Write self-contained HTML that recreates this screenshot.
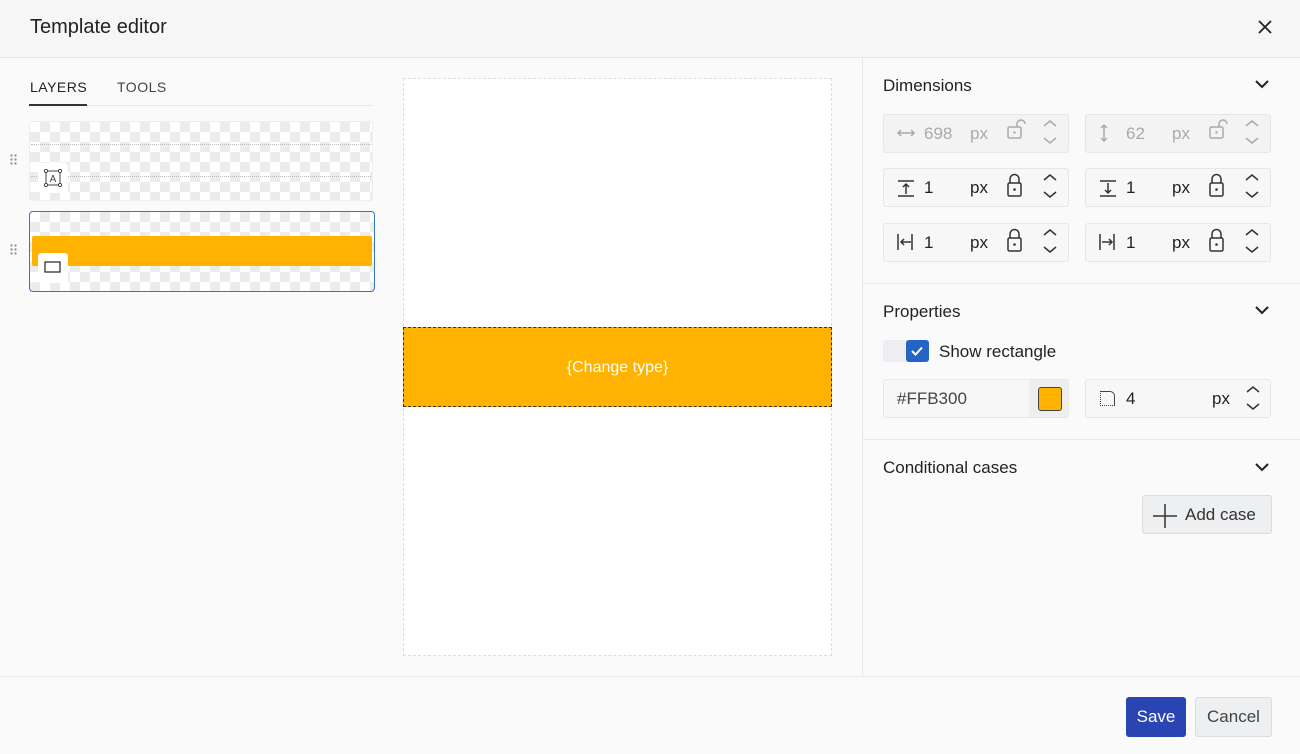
<!DOCTYPE html>
<html><head><style>
*{box-sizing:border-box;margin:0;padding:0}
body{width:1300px;height:754px;background:#fafafa;font-family:"Liberation Sans",sans-serif;color:#222;position:relative;overflow:hidden}
.abs{position:absolute}
.hdr{left:0;top:0;width:1300px;height:58px;background:#f6f6f6;border-bottom:1px solid #e8e8e8}
.chk{background-color:#fff;background-image:linear-gradient(45deg,#ececec 25%,transparent 25%,transparent 75%,#ececec 75%),linear-gradient(45deg,#ececec 25%,transparent 25%,transparent 75%,#ececec 75%);background-size:20px 20px;background-position:0 0,10px 10px}
.inp{position:absolute;width:186px;height:39px;border:1px solid #e6e6e6;border-radius:3px;background:#f7f7f7;font-size:17px}
.inp span{position:absolute;top:9px}
.dis{color:#aaa}
.sec{font-size:17px;color:#222;position:absolute;left:883px}
.chev{position:absolute;left:1254px}
</style></head><body>
<div class="abs hdr"><div class="abs" style="left:30px;top:16px;font-size:20px;color:#222">Template editor</div>
<svg class="abs" style="left:1257px;top:19px" width="16" height="16"><path d="M2 2L14 14M14 2L2 14" stroke="#222" stroke-width="1.8"/></svg></div>

<div class="abs" style="left:30px;top:79px;font-size:14px;letter-spacing:.5px;color:#222">LAYERS</div>
<div class="abs" style="left:117px;top:79px;font-size:14px;letter-spacing:.5px;color:#444">TOOLS</div>
<div class="abs" style="left:29px;top:105px;width:344px;height:1px;background:#e6e6e6"></div>
<div class="abs" style="left:29px;top:104px;width:58px;height:2px;background:#333"></div>

<svg class="abs" style="left:10px;top:154px" width="8" height="12" fill="#999"><circle cx="1.5" cy="1.5" r="1.2"/><circle cx="5.5" cy="1.5" r="1.2"/><circle cx="1.5" cy="5.5" r="1.2"/><circle cx="5.5" cy="5.5" r="1.2"/><circle cx="1.5" cy="9.5" r="1.2"/><circle cx="5.5" cy="9.5" r="1.2"/></svg>
<div class="abs chk" style="left:29px;top:121px;width:344px;height:80px;border:1px solid #eee;border-radius:3px"></div>
<div class="abs" style="left:31px;top:144px;width:340px;border-top:1px dotted #bbb"></div>
<div class="abs" style="left:31px;top:176px;width:340px;border-top:1px dotted #bbb"></div>
<div class="abs" style="left:38px;top:163px;width:30px;height:30px;background:#fff;border-radius:3px"></div>
<svg class="abs" style="left:44px;top:169px" width="18" height="18"><rect x="2" y="2" width="14" height="14" fill="none" stroke="#444"/><circle cx="2" cy="2" r="1.6" fill="#fff" stroke="#444"/><circle cx="16" cy="2" r="1.6" fill="#fff" stroke="#444"/><circle cx="2" cy="16" r="1.6" fill="#fff" stroke="#444"/><circle cx="16" cy="16" r="1.6" fill="#fff" stroke="#444"/><text x="9" y="13" font-size="10" text-anchor="middle" fill="#444" font-family="Liberation Sans">A</text></svg>

<svg class="abs" style="left:10px;top:244px" width="8" height="12" fill="#999"><circle cx="1.5" cy="1.5" r="1.2"/><circle cx="5.5" cy="1.5" r="1.2"/><circle cx="1.5" cy="5.5" r="1.2"/><circle cx="5.5" cy="5.5" r="1.2"/><circle cx="1.5" cy="9.5" r="1.2"/><circle cx="5.5" cy="9.5" r="1.2"/></svg>
<div class="abs chk" style="left:29px;top:211px;width:346px;height:81px;border:1.5px solid #3a72c4;border-radius:4px"></div>
<div class="abs" style="left:32px;top:236px;width:340px;height:30px;background:#ffb300;border-radius:2px"></div>
<div class="abs" style="left:38px;top:253px;width:30px;height:30px;background:#fff;border-radius:3px"></div>
<svg class="abs" style="left:44px;top:260px" width="18" height="14"><rect x="1" y="2" width="15" height="10" fill="none" stroke="#333" stroke-width="1.3"/></svg>

<div class="abs" style="left:403px;top:78px;width:429px;height:578px;background:#fff;border:1px dashed #ddd"></div>
<div class="abs" style="left:403px;top:327px;width:429px;height:80px;background:#ffb300;border:1px dashed #333;color:#fff;font-size:16px;text-align:center;line-height:80px">{Change type}</div>

<div class="abs" style="left:862px;top:58px;width:1px;height:618px;background:#e8e8e8"></div>
<div class="abs" style="left:0;top:676px;width:1300px;height:1px;background:#e8e8e8"></div>

<div class="sec" style="top:76px">Dimensions</div>
<svg class="chev" style="top:78px" width="16" height="12"><path d="M2 3L8 9L14 3" fill="none" stroke="#222" stroke-width="2"/></svg>

<div class="inp dis" style="left:883px;top:114px;background:#f3f3f3"><span style="left:40px">698</span><span style="left:86px">px</span></div>
<div class="inp dis" style="left:1085px;top:114px;background:#f3f3f3"><span style="left:40px">62</span><span style="left:86px">px</span></div>
<div class="inp" style="left:883px;top:168px"><span style="left:40px">1</span><span style="left:86px">px</span></div>
<div class="inp" style="left:1085px;top:168px"><span style="left:40px">1</span><span style="left:86px">px</span></div>
<div class="inp" style="left:883px;top:223px"><span style="left:40px">1</span><span style="left:86px">px</span></div>
<div class="inp" style="left:1085px;top:223px"><span style="left:40px">1</span><span style="left:86px">px</span></div>

<svg class="abs" style="left:883px;top:114px" width="400" height="160">
<g fill="none" stroke-width="1.5">
<g stroke="#aaa"><path d="M15 19h16M18 16l-3 3 3 3M28 16l3 3-3 3"/><path d="M221 11v16M218 14l3-3 3 3M218 24l3 3 3-3"/>
<g transform="translate(-7,0)"><rect x="132" y="13" width="13" height="11" rx="1.5"/><path d="M141 13V10a4 4 0 0 1 8 0"/><rect x="334" y="13" width="13" height="11" rx="1.5"/><path d="M343 13V10a4 4 0 0 1 8 0"/></g>
<path d="M161 12l6-5 6 5M161 24l6 5 6-5M363 12l6-5 6 5M363 24l6 5 6-5"/></g>
<g stroke="#333"><path d="M15 67h16M15 82h16M23 80v-10M20 73l3-3 3 3"/><path d="M217 67h16M217 82h16M225 69v10M222 76l3 3 3-3"/>
<path d="M15 120v16M29 120v16M18 128h10M21 125l-3 3 3 3"/><path d="M217 120v16M231 120v16M219 128h10M226 125l3 3-3 3"/>
<g transform="translate(-7,0)"><rect x="132" y="69" width="13" height="13" rx="1.5"/><path d="M134 69v-4a4.5 4.5 0 0 1 9 0v4"/><rect x="334" y="69" width="13" height="13" rx="1.5"/><path d="M336 69v-4a4.5 4.5 0 0 1 9 0v4"/>
<rect x="132" y="124" width="13" height="13" rx="1.5"/><path d="M134 124v-4a4.5 4.5 0 0 1 9 0v4"/><rect x="334" y="124" width="13" height="13" rx="1.5"/><path d="M336 124v-4a4.5 4.5 0 0 1 9 0v4"/></g>
<path d="M161 66l6-5 6 5M161 78l6 5 6-5M363 66l6-5 6 5M363 78l6 5 6-5M161 121l6-5 6 5M161 133l6 5 6-5M363 121l6-5 6 5M363 133l6 5 6-5"/></g>
<g fill="#333" stroke="none" transform="translate(-7,0)"><circle cx="138.5" cy="75.5" r="1.3"/><circle cx="340.5" cy="75.5" r="1.3"/><circle cx="138.5" cy="130.5" r="1.3"/><circle cx="340.5" cy="130.5" r="1.3"/></g>
<g fill="#aaa" stroke="none" transform="translate(-7,0)"><circle cx="138.5" cy="18.5" r="1.2"/><circle cx="340.5" cy="18.5" r="1.2"/></g>
</g></svg>

<div class="abs" style="left:862px;top:283px;width:438px;height:1px;background:#e8e8e8"></div>
<div class="sec" style="top:302px">Properties</div>
<svg class="chev" style="top:304px" width="16" height="12"><path d="M2 3L8 9L14 3" fill="none" stroke="#222" stroke-width="2"/></svg>
<div class="abs" style="left:883px;top:340px;width:46px;height:22px;background:#eceef1;border-radius:3px"></div>
<div class="abs" style="left:906px;top:340px;width:23px;height:22px;background:#2563c4;border-radius:3px"></div>
<svg class="abs" style="left:909px;top:344px" width="16" height="14"><path d="M3 7l3.5 3.5L13 3.5" fill="none" stroke="#fff" stroke-width="2"/></svg>
<div class="abs" style="left:939px;top:342px;font-size:17px">Show rectangle</div>
<div class="inp" style="left:883px;top:379px"><span style="left:13px;color:#444">#FFB300</span><div class="abs" style="left:145px;top:0;width:40px;height:37px;background:#eeeeee"></div><div class="abs" style="left:154px;top:7px;width:24px;height:24px;background:#ffb300;border:1px solid #444;border-radius:3px"></div></div>
<div class="inp" style="left:1085px;top:379px"><span style="left:14px;width:15px;height:15px;top:11px;border:1.3px dotted #444;border-top-right-radius:5px;border-top-style:solid;border-right-style:solid"></span><span style="left:40px">4</span><span style="left:126px">px</span>
<svg class="abs" style="left:159px;top:6px" width="16" height="28"><path d="M2 6l6-5 6 5M2 18l6 5 6-5" fill="none" stroke="#333" stroke-width="1.5"/></svg></div>

<div class="abs" style="left:862px;top:439px;width:438px;height:1px;background:#e8e8e8"></div>
<div class="sec" style="top:458px">Conditional cases</div>
<svg class="chev" style="top:461px" width="16" height="12"><path d="M2 3L8 9L14 3" fill="none" stroke="#222" stroke-width="2"/></svg>
<div class="abs" style="left:1142px;top:495px;width:130px;height:39px;background:#eeeff1;border:1px solid #ddd;border-radius:3px;font-size:17px;color:#333"><svg class="abs" style="left:9px;top:7px" width="26" height="26"><path d="M13 1v24M1 13h24" stroke="#333" stroke-width="1.5"/></svg><span class="abs" style="left:42px;top:9px">Add case</span></div>

<div class="abs" style="left:1126px;top:697px;width:60px;height:40px;background:#2a45b3;border-radius:3px;color:#fff;font-size:17px;text-align:center;line-height:40px">Save</div>
<div class="abs" style="left:1195px;top:697px;width:77px;height:40px;background:#eeeff1;border:1px solid #ddd;border-radius:3px;color:#444;font-size:17px;text-align:center;line-height:38px">Cancel</div>
</body></html>
